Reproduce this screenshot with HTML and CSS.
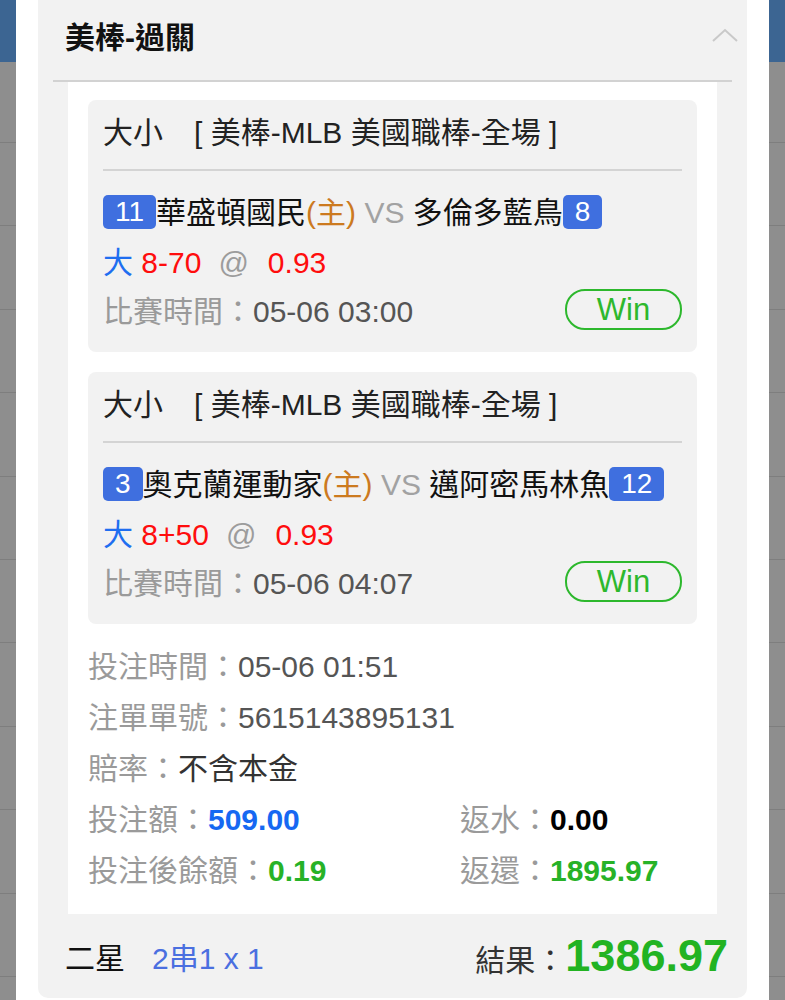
FILE: index.html
```html
<!DOCTYPE html>
<html lang="zh-Hant">
<head>
  <meta charset="UTF-8">
  <title>美棒-過關</title>
  <link rel="stylesheet" href="styles.css">
</head>
<body>

  <!-- page behind the dialog -->
  <div class="bg-page">
    <div class="bg-header"></div>
    <div class="bg-row first"></div>
    <div class="bg-row"></div>
    <div class="bg-row"></div>
    <div class="bg-row"></div>
    <div class="bg-row"></div>
    <div class="bg-row"></div>
    <div class="bg-row"></div>
    <div class="bg-row"></div>
    <div class="bg-row"></div>
    <div class="bg-row"></div>
    <div class="bg-row"></div>
  </div>

  <div class="modal">
    <div class="panel">
      <div class="panel-head">
        <h2>美棒-過關</h2>
        <svg class="chevron" width="26" height="14" viewBox="0 0 26 14">
          <polyline points="1,13 13,2 25,13" fill="none" stroke="#c9c9c9" stroke-width="2"/>
        </svg>
      </div>

      <div class="content">
        <div class="card">
          <div class="card-title">大小<span class="league">[ 美棒-MLB 美國職棒-全場 ]</span></div>
          <div class="teams">
            <span class="num">11</span>華盛頓國民<span class="home">(主)</span> <span class="vs">VS</span> 多倫多藍鳥<span class="num">8</span>
          </div>
          <div class="odds">
            <span class="pick">大</span> <span class="red">8-70</span><span class="at">@</span><span class="red">0.93</span>
          </div>
          <div class="time-row">
            <div><span class="label">比賽時間：</span><span class="val">05-06 03:00</span></div>
            <span class="win">Win</span>
          </div>
        </div>

        <div class="card last">
          <div class="card-title">大小<span class="league">[ 美棒-MLB 美國職棒-全場 ]</span></div>
          <div class="teams">
            <span class="num">3</span>奧克蘭運動家<span class="home">(主)</span> <span class="vs">VS</span> 邁阿密馬林魚<span class="num">12</span>
          </div>
          <div class="odds">
            <span class="pick">大</span> <span class="red">8+50</span><span class="at">@</span><span class="red">0.93</span>
          </div>
          <div class="time-row">
            <div><span class="label">比賽時間：</span><span class="val">05-06 04:07</span></div>
            <span class="win">Win</span>
          </div>
        </div>

        <div class="info">
          <div class="info-row"><span class="label">投注時間：</span><span class="val">05-06 01:51</span></div>
          <div class="info-row"><span class="label">注單單號：</span><span class="val">5615143895131</span></div>
          <div class="info-row"><span class="label">賠率：</span><span class="val dark">不含本金</span></div>
          <div class="info-row two">
            <div><span class="label">投注額：</span><b class="blue">509.00</b></div>
            <div><span class="label">返水：</span><b class="black">0.00</b></div>
          </div>
          <div class="info-row two">
            <div><span class="label">投注後餘額：</span><b class="green">0.19</b></div>
            <div><span class="label">返還：</span><b class="green">1895.97</b></div>
          </div>
        </div>
      </div>

      <div class="panel-foot">
        <div><span class="stars">二星</span><span class="combo">2串1 x 1</span></div>
        <div class="result">結果：<b>1386.97</b></div>
      </div>
    </div>
  </div>

</body>
</html>
```

FILE: styles.css
```css
body {
  margin: 0;
  font-family: "Liberation Sans", "Noto Sans CJK TC", sans-serif;
  background: #8e8e8e;
  overflow: hidden;
}

.bg-header {
  height: 62px;
  background: #3c6592;
}

.bg-row {
  height: 82.4px;
  border-bottom: 1px solid #7e7e7e;
}

.bg-row.first {
  height: 80px;
}

.modal {
  position: absolute;
  top: 0;
  left: 16px;
  right: 16px;
  bottom: 0;
  background: #fff;
  padding: 0 22px;
}

.panel {
  background: #f2f2f2;
  border-radius: 0 0 10px 10px;
}

.panel-head {
  height: 80px;
  display: flex;
  align-items: center;
  justify-content: space-between;
  margin: 0 15px;
  padding-left: 12px;
  border-bottom: 2px solid #d2d2d2;
}

.panel-head h2 {
  margin: 0 0 11px 0;
  font-size: 30px;
  font-weight: bold;
  color: #111;
}

.chevron {
  margin: 0 -6px 10px 0;
}

.content {
  background: #fff;
  margin: 0 30px;
  padding: 18px 20px;
}

.card {
  background: #f2f2f2;
  border-radius: 8px;
  padding: 0 15px 22px;
  margin-bottom: 20px;
  font-size: 30px;
  color: #111;
}

.card.last {
  margin-bottom: 17px;
}

.card-title {
  line-height: 40px;
  padding: 13px 0 16px;
  border-bottom: 2px solid #d4d4d4;
  margin-bottom: 17px;
  color: #222;
}

.league {
  margin-left: 31px;
}

.teams {
  height: 50px;
  line-height: 50px;
  white-space: nowrap;
}

.num {
  display: inline-block;
  background: #3f6fdf;
  color: #fff;
  font-size: 28px;
  height: 34px;
  line-height: 34px;
  padding: 0 12px;
  border-radius: 5px;
  vertical-align: 2px;
}

.home {
  color: #cc7a1f;
}

.vs {
  color: #a2a2a2;
}

.odds {
  height: 50px;
  line-height: 50px;
}

.pick {
  color: #1f6ef0;
}

.red {
  color: #ff0d0d;
}

.at {
  color: #9c9c9c;
  margin: 0 19px 0 17px;
}

.time-row {
  height: 42px;
  display: flex;
  align-items: center;
  justify-content: space-between;
}

.label {
  color: #9a9a9a;
}

.val {
  color: #555;
}

.val.dark {
  color: #333;
}

.win {
  width: 113px;
  height: 37px;
  border: 2px solid #2db82d;
  border-radius: 20px;
  color: #2db82d;
  text-align: center;
  line-height: 37px;
  font-size: 31px;
}

.info {
  font-size: 30px;
}

.info-row {
  line-height: 51px;
}

.info-row.two {
  display: grid;
  grid-template-columns: 372px 1fr;
}

.blue {
  color: #1668f2;
}

.black {
  color: #000;
}

.green {
  color: #27b227;
}

.panel-foot {
  height: 84px;
  display: flex;
  align-items: center;
  justify-content: space-between;
  padding: 0 19px 0 27px;
  font-size: 30px;
}

.stars {
  color: #111;
}

.combo {
  color: #4a6fe0;
  margin-left: 27px;
}

.result {
  color: #333;
}

.result b {
  font-size: 45px;
  color: #22b322;
}
```
